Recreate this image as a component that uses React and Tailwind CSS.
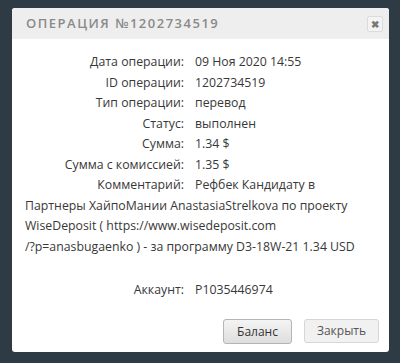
import React from 'react';

const rows = [
  ['Дата операции:', '09 Ноя 2020 14:55'],
  ['ID операции:', '1202734519'],
  ['Тип операции:', 'перевод'],
  ['Статус:', 'выполнен'],
  ['Сумма:', '1.34 $'],
  ['Сумма с комиссией:', '1.35 $'],
];

const App = () => {
  return (
    <div className="w-[400px] h-[363px] bg-[#2e3b44] pt-[8px] pl-[12px]">
      <div className="w-[377px] h-[344px] bg-white rounded-[3px] overflow-hidden flex flex-col" style={{ fontFamily: '"Open Sans", sans-serif' }}>
        {/* Header */}
        <div className="h-[31px] bg-[#eeeeee] flex items-center justify-between pl-[14px] pr-[6px]">
          <span className="text-[13px] font-semibold tracking-[1.5px] text-[#8a8a8a]">ОПЕРАЦИЯ №1202734519</span>
          <button className="w-[16px] h-[16px] border border-[#dcdcdc] rounded-[2px] bg-[#f3f3f3] flex items-center justify-center text-[#777] text-[10px] font-bold leading-none">
            ✖
          </button>
        </div>

        {/* Body */}
        <div className="flex-1 pt-[13px] px-[13px] text-[12.3px] leading-[20.5px] text-[#383838]">
          {rows.map(([label, value]) => (
            <div key={label} className="flex">
              <span className="w-[159px] text-right">{label}</span>
              <span className="ml-[11px]">{value}</span>
            </div>
          ))}
          <p className="whitespace-nowrap">
            <span className="inline-block w-[159px] text-right">Комментарий:</span>
            <span className="ml-[11px]">Рефбек Кандидату в</span>
            <br />
            Партнеры ХайпоМании AnastasiaStrelkova по проекту
            <br />
            WiseDeposit ( https://www.wisedeposit.com
            <br />
            /?p=anasbugaenko ) - за программу D3-18W-21 1.34 USD
          </p>
          <div className="flex mt-[23px]">
            <span className="w-[159px] text-right">Аккаунт:</span>
            <span className="ml-[11px]">P1035446974</span>
          </div>
        </div>

        {/* Footer */}
        <div className="flex justify-end gap-[12px] pr-[10px] pb-[8px]">
          <button className="w-[69px] h-[25px] rounded-[3px] border border-[#b5b5b5] bg-gradient-to-b from-[#f4f4f4] to-[#dedede] text-[12px] text-[#333]">
            Баланс
          </button>
          <button className="w-[75px] h-[24px] rounded-[3px] border border-[#d6d6d6] bg-[#f1f1f1] text-[12px] text-[#555]">
            Закрыть
          </button>
        </div>
      </div>
    </div>
  );
};

export default App;
